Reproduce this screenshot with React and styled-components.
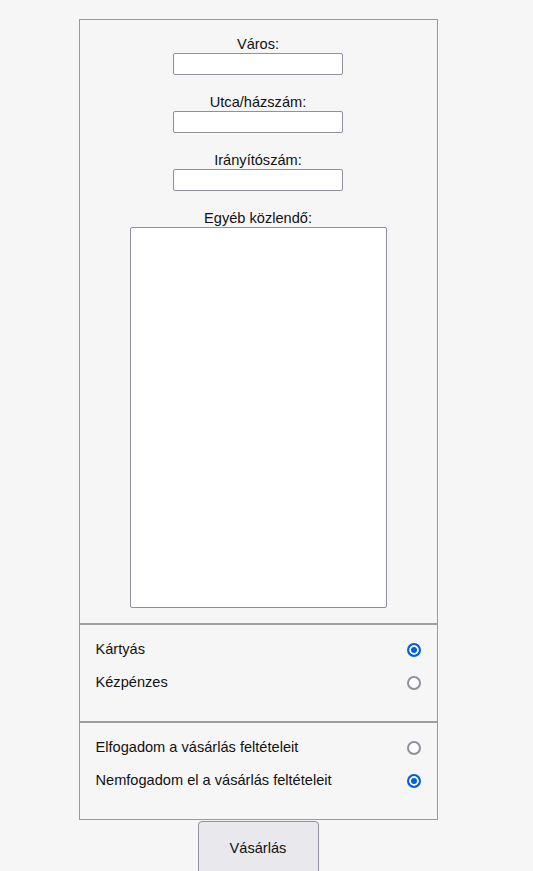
import React, { useState } from 'react'
import styled, { createGlobalStyle } from 'styled-components'

const GlobalStyle = createGlobalStyle`
    html {
        overflow: hidden;
    }
    body {
        margin: 0;
        background: #f6f6f6;
        font-family: "Liberation Sans", Arial, sans-serif;
        color: #111;
    }
`

const Page = styled.div`
    width: 516px;
    padding-top: 19px;
    display: flex;
    flex-direction: column;
    align-items: center;
`

const Form = styled.form`
    width: 359px;
    box-sizing: border-box;
    border: 1px solid #9a9a9a;
    display: flex;
    flex-direction: column;
`

const Fields = styled.div`
    padding: 16px 0 15px;
    display: flex;
    flex-direction: column;
    align-items: center;
    gap: 19px;
`

const Field = styled.label`
    display: flex;
    flex-direction: column;
    align-items: center;
    font-size: 14.6px;
    line-height: 17px;
`

const TextInput = styled.input`
    box-sizing: border-box;
    width: 170px;
    height: 22px;
    margin: 0;
    border: 1px solid #8f8f9d;
    border-radius: 2px;
    background: #fff;
    font: inherit;
    padding: 0 4px;
`

const Notes = styled.textarea`
    box-sizing: border-box;
    width: 257px;
    height: 381px;
    margin: 0;
    border: 1px solid #8f8f9d;
    border-radius: 2px;
    background: #fff;
    resize: none;
    font: inherit;
`

const Choices = styled.div`
    border-top: 2px solid #9e9e9e;
    padding: 8px 16px 22px;
    display: flex;
    flex-direction: column;
`

const Choice = styled.label`
    height: 33px;
    display: flex;
    align-items: center;
    justify-content: space-between;
    font-size: 14.6px;
    line-height: 17px;
`

const Radio = styled.input`
    appearance: none;
    box-sizing: border-box;
    width: 14px;
    height: 14px;
    margin: 0 0 0 0;
    border-radius: 50%;
    border: 2px solid #8f8f9d;
    background: #fff;

    &:checked {
        border-color: #0060df;
        background: #0060df;
        box-shadow: inset 0 0 0 2px #fff;
    }
`

const BuyButton = styled.button`
    box-sizing: border-box;
    width: 121px;
    height: 54px;
    margin: 1px 0 0;
    border: 1px solid #8f8f9d;
    border-radius: 4px;
    background: #e9e9ed;
    color: #111;
    font-family: inherit;
    font-size: 14.6px;
`

const App = () => {
    const [payment, setPayment] = useState('kartyas')
    const [terms, setTerms] = useState('nem')

    return (
        <Page>
            <GlobalStyle />
            <Form onSubmit={e => e.preventDefault()}>
                <Fields>
                    <Field>Város:<TextInput type="text" /></Field>
                    <Field>Utca/házszám:<TextInput type="text" /></Field>
                    <Field>Irányítószám:<TextInput type="text" /></Field>
                    <Field>Egyéb közlendő:<Notes /></Field>
                </Fields>
                <Choices>
                    <Choice>
                        Kártyás
                        <Radio type="radio" name="fizetes" checked={payment === 'kartyas'} onChange={() => setPayment('kartyas')} />
                    </Choice>
                    <Choice>
                        Kézpénzes
                        <Radio type="radio" name="fizetes" checked={payment === 'kp'} onChange={() => setPayment('kp')} />
                    </Choice>
                </Choices>
                <Choices>
                    <Choice>
                        Elfogadom a vásárlás feltételeit
                        <Radio type="radio" name="feltetel" checked={terms === 'igen'} onChange={() => setTerms('igen')} />
                    </Choice>
                    <Choice>
                        Nemfogadom el a vásárlás feltételeit
                        <Radio type="radio" name="feltetel" checked={terms === 'nem'} onChange={() => setTerms('nem')} />
                    </Choice>
                </Choices>
            </Form>
            <BuyButton type="button">Vásárlás</BuyButton>
        </Page>
    )
}

export default App
